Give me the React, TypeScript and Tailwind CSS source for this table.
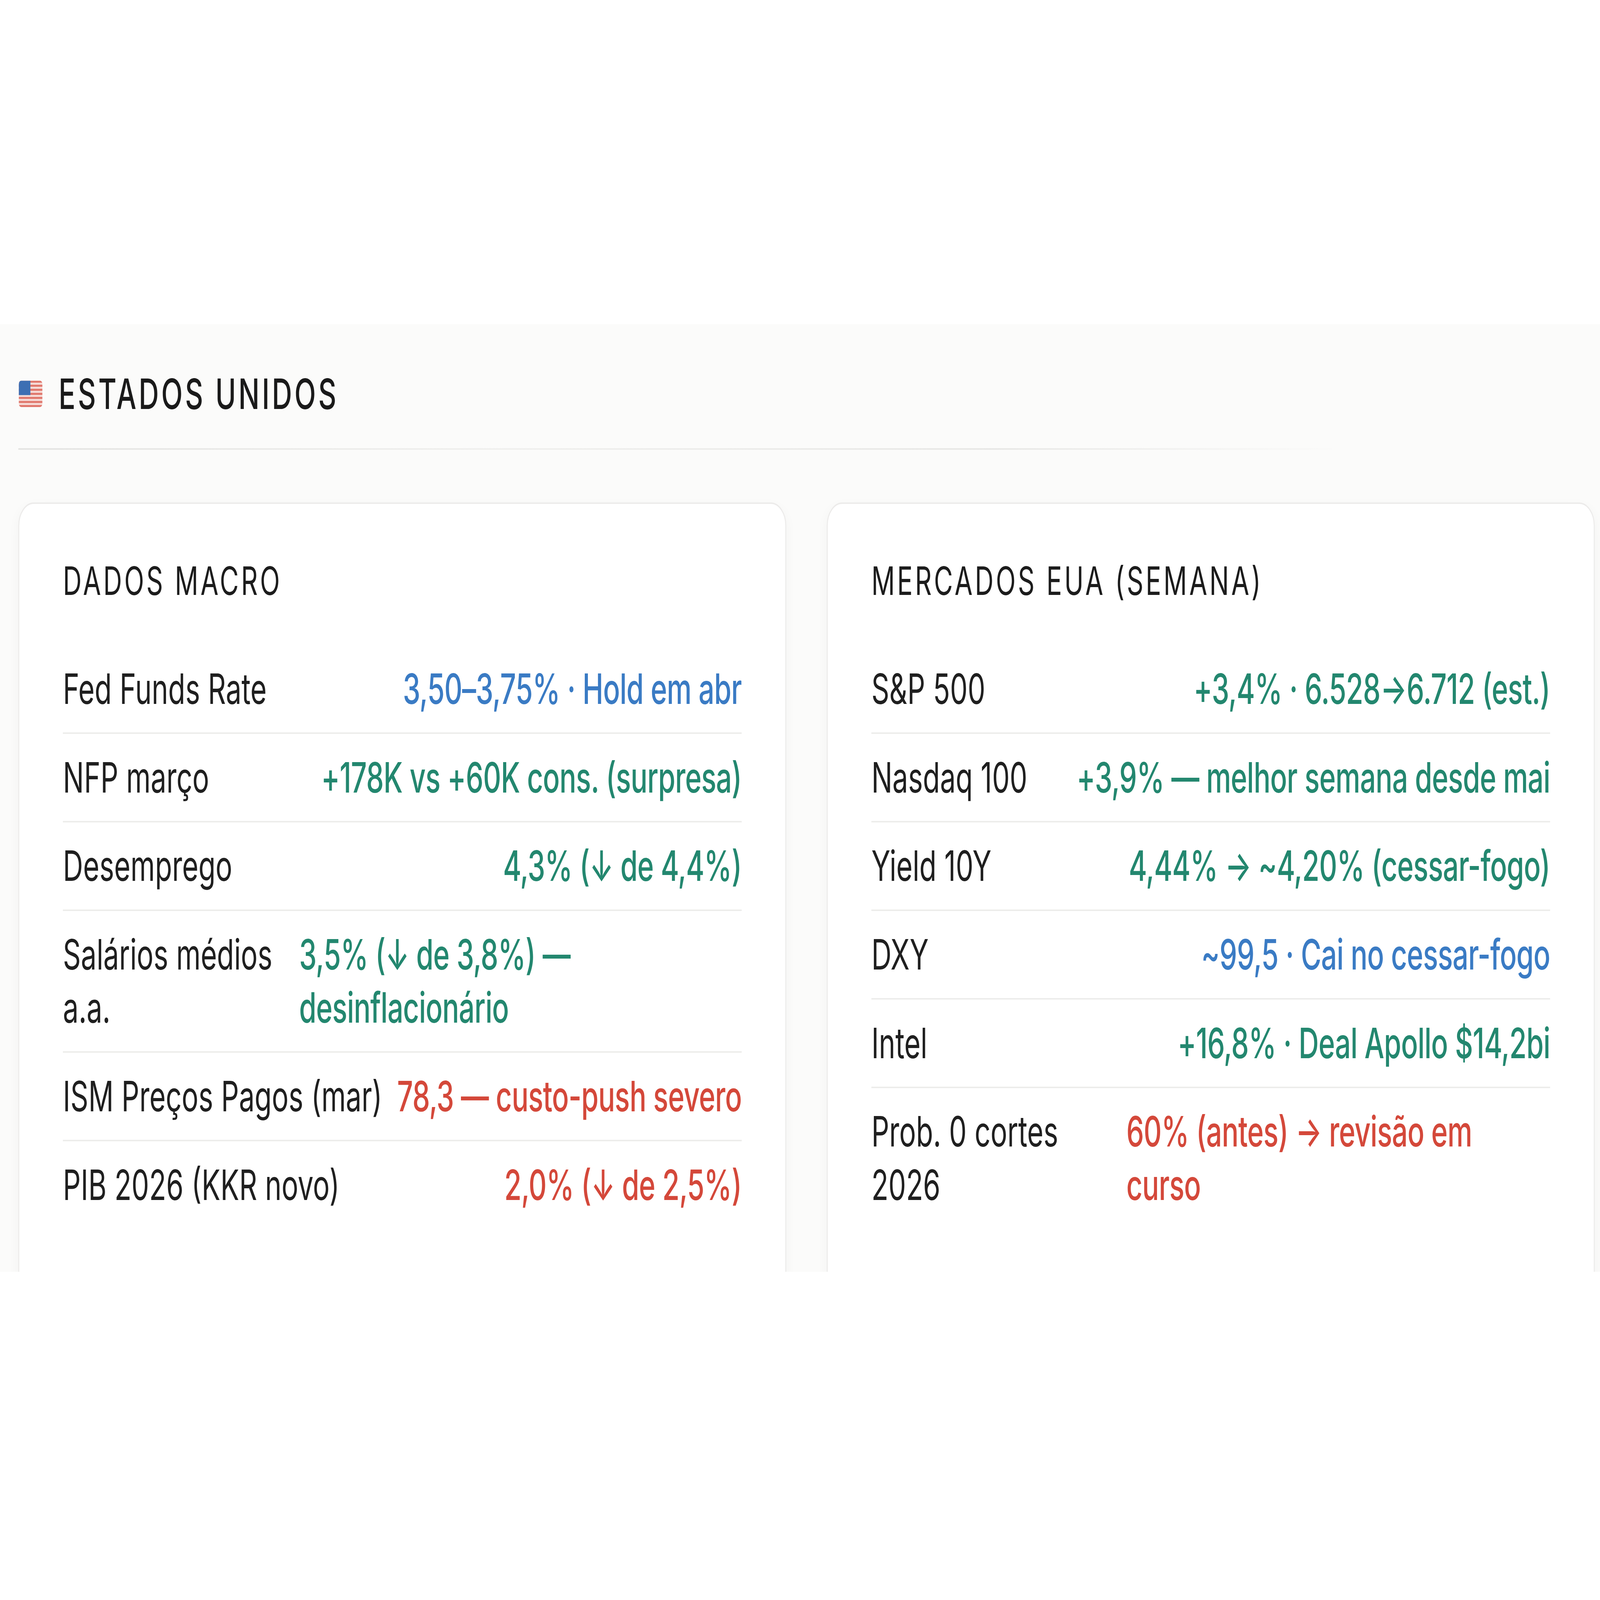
import React, { useEffect, useState } from 'react';

type Tone = 'blue' | 'green' | 'red';

interface Row {
	label: string;
	value: string;
	tone: Tone;
	labelWidth?: string;
}

// design size of the board; it is scaled to whatever window we get
const BOARD_W = 6638;
const BOARD_H = 4426;

const toneClass: Record<Tone, string> = {
	blue: 'text-[#3a7bc4]',
	green: 'text-[#23876f]',
	red: 'text-[#d4483a]'
};

const macro: Row[] = [
	{ label: 'Fed Funds Rate', value: '3,50–3,75% · Hold em abr', tone: 'blue' },
	{ label: 'NFP março', value: '+178K vs +60K cons. (surpresa)', tone: 'green' },
	{ label: 'Desemprego', value: '4,3% (↓ de 4,4%)', tone: 'green' },
	{ label: 'Salários médios a.a.', value: '3,5% (↓ de 3,8%) — desinflacionário', tone: 'green', labelWidth: 'w-[920px]' },
	{ label: 'ISM Preços Pagos (mar)', value: '78,3 — custo-push severo', tone: 'red' },
	{ label: 'PIB 2026 (KKR novo)', value: '2,0% (↓ de 2,5%)', tone: 'red' }
];

const markets: Row[] = [
	{ label: 'S&P 500', value: '+3,4% · 6.528→6.712 (est.)', tone: 'green' },
	{ label: 'Nasdaq 100', value: '+3,9% — melhor semana desde mai', tone: 'green' },
	{ label: 'Yield 10Y', value: '4,44% → ~4,20% (cessar-fogo)', tone: 'green' },
	{ label: 'DXY', value: '~99,5 · Cai no cessar-fogo', tone: 'blue' },
	{ label: 'Intel', value: '+16,8% · Deal Apollo $14,2bi', tone: 'green' },
	{ label: 'Prob. 0 cortes 2026', value: '60% (antes) → revisão em curso', tone: 'red', labelWidth: 'w-[998px]' }
];

function UsFlag() {
	const stripes = Array.from({ length: 13 }, (_, i) => i);
	return (
		<svg width="98" height="73" viewBox="0 0 98 73" className="shrink-0">
			<defs>
				<clipPath id="flag-clip">
					<rect x="0" y="0" width="98" height="73" rx="10" />
				</clipPath>
			</defs>
			<g clipPath="url(#flag-clip)">
				<rect width="98" height="73" fill="#f6dcd8" />
				{stripes.map((i) =>
					i % 2 === 0 ? (
						<rect key={i} x="0" y={(i * 73) / 13} width="98" height={73 / 13} fill="#e0776c" />
					) : null
				)}
				<rect x="0" y="0" width="48" height="40" fill="#3d6fb3" />
			</g>
		</svg>
	);
}

function DataCard({ title, rows }: { title: string; rows: Row[] }) {
	return (
		<div className="bg-white border-4 border-[#ecebea] rounded-[64px] shadow-[0_10px_40px_rgba(0,0,0,0.035)] pt-[148px] pb-[400px] px-[181px]">
			<h3 className="text-[108px] leading-[130px] tracking-[0.085em] font-normal text-[#1c1c1c] mb-[113px]">
				{title}
			</h3>
			<div className="flex flex-col">
				{rows.map((row, i) => (
					<div
						key={row.label}
						className={`flex items-start gap-[60px] py-[47px] text-[116px] leading-[147px] ${row.labelWidth ? 'justify-start' : 'justify-between'} ${i < rows.length - 1 ? 'border-b-4 border-[#ececea]' : ''}`}
					>
						<span className={`text-[#1f1f1f] ${row.labelWidth ? `${row.labelWidth} shrink-0` : 'shrink-0 whitespace-nowrap'}`}>
							{row.label}
						</span>
						<span className={`font-medium tracking-[-0.01em] ${toneClass[row.tone]} ${row.labelWidth ? 'max-w-[1600px]' : 'whitespace-nowrap'}`}>
							{row.value}
						</span>
					</div>
				))}
			</div>
		</div>
	);
}

function useViewport() {
	const read = () => ({ w: window.innerWidth, h: window.innerHeight });
	const [size, setSize] = useState(read);
	useEffect(() => {
		const onResize = () => setSize(read());
		window.addEventListener('resize', onResize);
		return () => window.removeEventListener('resize', onResize);
	}, []);
	return size;
}

export default function App() {
	const { w, h } = useViewport();
	const sx = w / BOARD_W;
	const sy = h / BOARD_H;

	return (
		<div className="w-screen h-screen overflow-hidden bg-white">
			<div
				className="w-[6638px] h-[4426px] bg-white font-['Inter','Noto_Sans',sans-serif] overflow-hidden origin-top-left"
				style={{ transform: `scale(${sx}, ${sy})` }}
			>
				<div className="h-[897px]" />
				<section className="h-[2621px] overflow-hidden bg-[#fbfbfa] pl-[76px] pr-[22px] pt-[122px]">
					{/* Section header */}
					<div className="flex items-center gap-[67px] pl-[2px]">
						<UsFlag />
						<h2 className="text-[116px] leading-[140px] tracking-[0.085em] font-medium text-[#1a1a1a]">
							ESTADOS UNIDOS
						</h2>
					</div>
					<div className="mt-[81px] h-[4px] bg-[linear-gradient(90deg,#e2e2e0_0%,#efefed_30%,#e6e6e4_62%,transparent_84%)]" />

					{/* Cards */}
					<div className="grid grid-cols-2 gap-[168px] mt-[146px]">
						<DataCard title="DADOS MACRO" rows={macro} />
						<DataCard title="MERCADOS EUA (SEMANA)" rows={markets} />
					</div>
				</section>
			</div>
		</div>
	);
}
